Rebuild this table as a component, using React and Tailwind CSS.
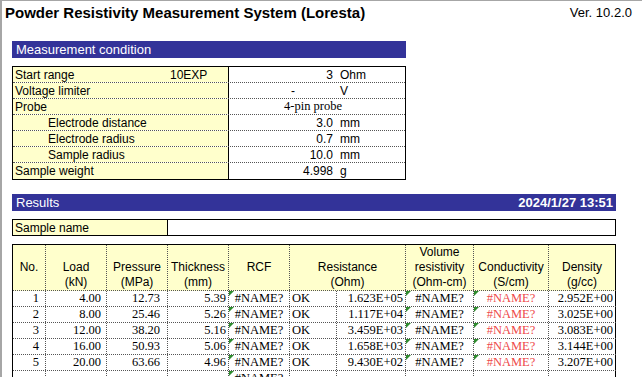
import React from "react";

const sans = "font-['Liberation_Sans',Arial,sans-serif]";
const serif = "font-['Liberation_Serif','Times_New_Roman',serif]";

const conditions = [
  { label: "Start range", extra: "10EXP", value: "3", unit: "Ohm" },
  { label: "Voltage limiter", value: "-", unit: "V", dash: true },
  { label: "Probe", text: "4-pin probe" },
  { label: "Electrode distance", indent: true, value: "3.0", unit: "mm" },
  { label: "Electrode radius", indent: true, value: "0.7", unit: "mm" },
  { label: "Sample radius", indent: true, value: "10.0", unit: "mm" },
  { label: "Sample weight", value: "4.998", unit: "g" },
];

const headers = [
  { w: "w-[33px]", lines: ["", "No.", ""] },
  { w: "w-[61px]", lines: ["", "Load", "(kN)"] },
  { w: "w-[61px]", lines: ["", "Pressure", "(MPa)"] },
  { w: "w-[61px]", lines: ["", "Thickness", "(mm)"] },
  { w: "w-[61px]", lines: ["", "RCF", ""] },
  { w: "w-[116px]", lines: ["", "Resistance", "(Ohm)"] },
  { w: "w-[68px]", lines: ["Volume", "resistivity", "(Ohm-cm)"] },
  { w: "w-[75px]", lines: ["", "Conductivity", "(S/cm)"] },
  { w: "w-[67px]", lines: ["", "Density", "(g/cc)"], last: true },
];

const rows = [
  ["1", "4.00", "12.73", "5.39", "1.623E+05", "2.952E+00"],
  ["2", "8.00", "25.46", "5.26", "1.117E+04", "3.025E+00"],
  ["3", "12.00", "38.20", "5.16", "3.459E+03", "3.083E+00"],
  ["4", "16.00", "50.93", "5.06", "1.658E+03", "3.144E+00"],
  ["5", "20.00", "63.66", "4.96", "9.430E+02", "3.207E+00"],
];

function Flag() {
  return (
    <svg width="5" height="5" className="absolute left-0 top-0">
      <polygon points="0,0 5,0 0,5" fill="#2e8b2e" />
    </svg>
  );
}

const cell = "h-full border-r border-dotted border-r-[#555] flex items-center shrink-0";

function DataRow({ r, blank }) {
  return (
    <div className={`flex h-[16px] border-b border-dotted border-b-[#555] ${serif} text-[12.5px] leading-none`}>
      <div className={`${cell} w-[33px] justify-end pr-[6px]`}>{r?.[0]}</div>
      <div className={`${cell} w-[61px] justify-end pr-[5px]`}>{r?.[1]}</div>
      <div className={`${cell} w-[61px] justify-end pr-[7px]`}>{r?.[2]}</div>
      <div className={`${cell} w-[61px] justify-end pr-[2px]`}>{r?.[3]}</div>
      <div className={`${cell} w-[61px] justify-center relative`}>
        <Flag />
        #NAME?
      </div>
      <div className={`${cell} w-[47px] pl-[2px]`}>{blank ? "" : "OK"}</div>
      <div className={`${cell} w-[69px] justify-end pr-[2px] relative`}>{r?.[4]}</div>
      <div className={`${cell} w-[68px] justify-center relative`}>
        {!blank && <Flag />}
        {blank ? "" : "#NAME?"}
      </div>
      <div className={`${cell} w-[75px] justify-center relative text-[#ee4a4a]`}>
        {!blank && <Flag />}
        {blank ? "" : "#NAME?"}
      </div>
      <div className="h-full border-r border-black flex items-center justify-end pr-[2px] w-[67px] shrink-0">{r?.[5]}</div>
    </div>
  );
}

export default function App() {
  return (
    <div className={`w-[642px] h-[377px] overflow-hidden bg-white border-t border-l-2 border-[#a6a6a6] ${sans} text-black`}>
      {/* title */}
      <div className="h-[40px] flex items-start justify-between pl-[3px] pr-[10px] pt-[3px]">
        <div className="text-[15px] font-bold leading-[18px]">Powder Resistivity Measurement System (Loresta)</div>
        <div className="text-[13px] leading-[18px]">Ver. 10.2.0</div>
      </div>

      <div className="ml-[10px]">
        {/* measurement condition */}
        <div className="w-[394px] h-[17px] bg-[#333399] text-white text-[13px] leading-[17px] pl-[4px]">Measurement condition</div>

        <div className="mt-[8px] w-[394px] border border-black text-[12px] leading-none">
          {conditions.map((c, i) => (
            <div key={c.label} className={`flex h-[16px] ${i < conditions.length - 1 ? "border-b border-dotted border-b-[#555]" : ""}`}>
              <div className={`w-[216px] shrink-0 bg-[#ffffcc] border-r border-black flex items-center ${c.indent ? "pl-[35px]" : "pl-[2px]"}`}>
                <span className={c.extra ? "w-[155px]" : ""}>{c.label}</span>
                {c.extra && <span>{c.extra}</span>}
              </div>
              <div className="flex-1 flex items-center">
                {c.text ? (
                  <div className={`w-full text-center pr-[8px] ${serif} text-[12.5px]`}>{c.text}</div>
                ) : (
                  <>
                    <div className={`w-[104px] ${c.dash ? "pr-[38px]" : ""} text-right`}>{c.value}</div>
                    <div className="ml-[7px]">{c.unit}</div>
                  </>
                )}
              </div>
            </div>
          ))}
        </div>

        {/* results */}
        <div className="mt-[14px] w-[604px] h-[17px] bg-[#333399] text-white text-[13px] leading-[17px] pl-[4px] pr-[3px] flex justify-between">
          <span>Results</span>
          <span className="font-bold">2024/1/27 13:51</span>
        </div>

        <div className="mt-[8px] w-[604px] h-[17px] border border-black flex text-[12px]">
          <div className="w-[155px] bg-[#ffffcc] border-r border-black pl-[2px] flex items-center leading-none">Sample name</div>
          <div className="flex-1" />
        </div>

        {/* data table */}
        <div className="mt-[8px] w-[604px] border-t border-l border-black">
          <div className="flex h-[46px] bg-[#ffffcc] border-b border-dotted border-b-[#555] text-[12px] leading-[15px]">
            {headers.map((h, i) => (
              <div
                key={i}
                className={`${h.w} shrink-0 h-full flex flex-col items-center justify-end ${h.last ? "border-r border-black" : "border-r border-dotted border-r-[#555]"}`}
              >
                {h.lines.map((l, j) => (
                  <div key={j} className="h-[15px]">{l}</div>
                ))}
              </div>
            ))}
          </div>
          {rows.map((r) => (
            <DataRow key={r[0]} r={r} />
          ))}
          <DataRow blank />
        </div>
      </div>
    </div>
  );
}
